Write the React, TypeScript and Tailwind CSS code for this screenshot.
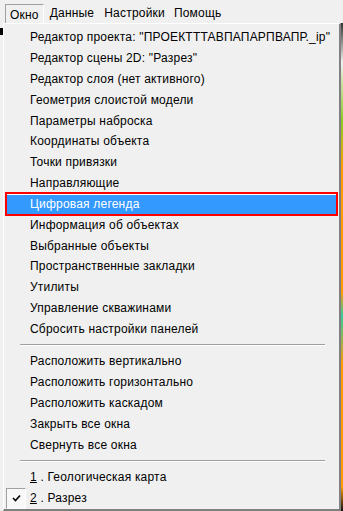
type Item = {label: string; active?: boolean};

const groupA: Item[] = [
  {label: 'Редактор проекта: "ПРОЕКТТТАВПАПАРПВАПР._ip"'},
  {label: 'Редактор сцены 2D: "Разрез"'},
  {label: 'Редактор слоя (нет активного)'},
  {label: 'Геометрия слоистой модели'},
  {label: 'Параметры наброска'},
  {label: 'Координаты объекта'},
  {label: 'Точки привязки'},
  {label: 'Направляющие'},
  {label: 'Цифровая легенда', active: true},
  {label: 'Информация об объектах'},
  {label: 'Выбранные объекты'},
  {label: 'Пространственные закладки'},
  {label: 'Утилиты'},
  {label: 'Управление скважинами'},
  {label: 'Сбросить настройки панелей'},
];

const groupB: Item[] = [
  {label: 'Расположить вертикально'},
  {label: 'Расположить горизонтально'},
  {label: 'Расположить каскадом'},
  {label: 'Закрыть все окна'},
  {label: 'Свернуть все окна'},
];

function Row({item}: {item: Item}) {
  if (item.active) {
    return (
      <div className="-mx-[1px] border-2 border-[#ff0000] h-[25px] -my-[2px] relative z-10">
        <div className="h-full border-t border-white bg-[#3399ff] flex items-center pl-[23px] text-white whitespace-nowrap">
          {item.label}
        </div>
      </div>
    );
  }
  return (
    <div className="h-[21px] flex items-center pl-[24px] text-black whitespace-nowrap">
      {item.label}
    </div>
  );
}

function Separator() {
  return (
    <div className="h-[12px] flex items-center pl-[14px] pr-[12px]">
      <div className="w-full border-t border-[#a0a0a0] border-b border-b-white" />
    </div>
  );
}

export default function App() {
  return (
    <div
      className="w-[343px] h-[511px] bg-[#f0f0f0] overflow-hidden flex flex-col text-[12px] tracking-[0.2px]"
      style={{fontFamily: '"Liberation Sans", Arial, sans-serif'}}
    >
      <div className="h-[23px] flex items-end pl-[5px] shrink-0 whitespace-nowrap">
        <div className="h-[20px] px-[4px] flex items-center border-t border-l border-r border-t-[#a0a0a0] border-l-[#a0a0a0] border-r-white mb-[-1px]">
          Окно
        </div>
        <div className="h-[20px] ml-[6px] flex items-center">Данные</div>
        <div className="h-[20px] ml-[10px] flex items-center">Настройки</div>
        <div className="h-[20px] ml-[9px] flex items-center">Помощь</div>
      </div>

      <div className="flex flex-1 min-h-0">
        <div className="w-[3px] shrink-0 flex flex-col pt-[5px]">
          <div className="h-[7px] bg-black" />
        </div>
        <div className="flex-1 min-w-0 overflow-hidden border-t border-l border-white border-r-2 border-b-2 border-r-[#808080] border-b-[#808080] pt-[3px] px-[2px] flex flex-col">
          {groupA.map((it) => (
            <Row key={it.label} item={it} />
          ))}
          <Separator />
          {groupB.map((it) => (
            <Row key={it.label} item={it} />
          ))}
          <Separator />
          <div className="h-[21px] flex items-center pl-[24px]">
            <span className="underline">1</span>
            <span>&nbsp;. Геологическая карта</span>
          </div>
          <div className="h-[21px] flex items-center">
            <div className="w-[20px] h-[21px] border border-t-[#a0a0a0] border-l-[#a0a0a0] border-b-white border-r-white bg-[#f8f8f8] flex items-center justify-center">
              <svg width="9" height="8" viewBox="0 0 9 8">
                <path d="M1 4 L3.5 6.5 L8 1.5" stroke="#000" strokeWidth="1.6" fill="none" />
              </svg>
            </div>
            <span className="ml-[4px] underline">2</span>
            <span>&nbsp;. Разрез</span>
          </div>
        </div>
        <div className="w-[2px] shrink-0 bg-[linear-gradient(180deg,#333_0%,#f0f0f0_8%,#88cc22_20%,#ff9900_30%,#ff9900_55%,#33cc99_60%,#ff9900_70%,#ff9900_95%,#111_100%)]" />
      </div>
    </div>
  );
}
